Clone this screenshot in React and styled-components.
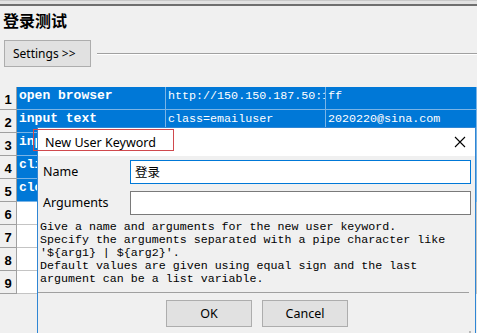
import React from "react";
import styled, { createGlobalStyle } from "styled-components";

const Global = createGlobalStyle`
  html, body { margin: 0; padding: 0; }
  body {
    background: #f0f0f0;
    width: 477px;
    height: 333px;
    overflow: hidden;
    font-family: "Noto Sans", "Liberation Sans", sans-serif;
  }
`;

const Page = styled.div`
  position: relative;
  width: 477px;
  height: 333px;
  display: flex;
  flex-direction: column;
  background: #f0f0f0;
`;

const TopStrip = styled.div`
  height: 6px;
  background: linear-gradient(
    to bottom,
    #c9c9c9 0px, #c9c9c9 1px,
    #e2e2e2 1px, #e2e2e2 4px,
    #6f6f6f 4px, #6f6f6f 6px
  );
`;

const Title = styled.h1`
  margin: 3px 0 0 3px;
  height: 22px;
  font-family: "Noto Sans CJK SC", sans-serif;
  font-size: 16px;
  font-weight: 700;
  line-height: 22px;
  color: #000;
`;

const SettingsRow = styled.div`
  margin-top: 9px;
  display: flex;
  align-items: center;
  gap: 6px;
  padding-left: 4px;
`;

const SettingsButton = styled.button`
  width: 87px;
  height: 27px;
  padding: 0 0 0 8px;
  text-align: left;
  background: #e1e1e1;
  border: 1px solid #adadad;
  font-family: "Noto Sans", sans-serif;
  font-size: 12px;
  color: #000;
`;

const Rule = styled.div`
  flex: 1;
  height: 1px;
  background: #a0a0a0;
  box-shadow: 0 1px 0 #ffffff;
`;

const Grid = styled.div`
  margin-top: 20px;
  display: grid;
  grid-template-columns: 17px 149px 160px 1fr;
  grid-auto-rows: 23px;
`;

const RowLabel = styled.div`
  background: #f0f0f0;
  border-right: 1px solid #a0a0a0;
  border-bottom: 1px solid #a0a0a0;
  display: flex;
  align-items: center;
  justify-content: center;
  font-family: "Liberation Sans", sans-serif;
  font-weight: 700;
  font-size: 13px;
  color: #000;
  padding-top: 2px;
  box-sizing: border-box;
`;

const Cell = styled.div`
  background: ${(p) => (p.$selected ? "#0078d7" : "#ffffff")};
  border-right: 1px solid ${(p) => (p.$selected ? "#7ab4e6" : "#c4c4c4")};
  border-bottom: 1px solid ${(p) => (p.$selected ? "#7ab4e6" : "#c4c4c4")};
  color: #fff;
  font-family: "Liberation Mono", monospace;
  font-size: ${(p) => (p.$keyword ? "13px" : "11.7px")};
  font-weight: ${(p) => (p.$keyword ? 700 : 400)};
  line-height: 18px;
  padding: 0 0 0 2px;
  white-space: nowrap;
  overflow: hidden;
  box-sizing: border-box;
`;

const rows = [
  ["open browser", "http://150.150.187.50:1", "ff"],
  ["input text", "class=emailuser", "2020220@sina.com"],
  ["input text", "", ""],
  ["click element", "", ""],
  ["close browser", "", ""],
  ["", "", ""],
  ["", "", ""],
  ["", "", ""],
  ["", "", ""],
];

const Dialog = styled.div`
  position: absolute;
  left: 37px;
  top: 127px;
  width: 439px;
  height: 215px;
  box-sizing: border-box;
  border: 1px solid #2f86d4;
  background: #f0f0f0;
  display: flex;
  flex-direction: column;
`;

const TitleBar = styled.div`
  height: 28px;
  flex: none;
  background: #ffffff;
  display: flex;
  align-items: center;
  justify-content: space-between;
  padding: 0 9px 0 7px;
`;

const DialogTitle = styled.span`
  font-family: "Noto Sans", sans-serif;
  font-size: 12.5px;
  color: #000;
`;

const CloseIcon = () => (
  <svg width="12" height="12" viewBox="0 0 12 12">
    <path d="M1 1 L11 11 M11 1 L1 11" stroke="#000" strokeWidth="1.1" fill="none" />
  </svg>
);

const Annotation = styled.div`
  position: absolute;
  left: 33px;
  top: 129px;
  width: 141px;
  height: 22px;
  border: 1px solid #d0494d;
  box-sizing: border-box;
  pointer-events: none;
`;

const Body = styled.div`
  flex: 1;
  display: flex;
  flex-direction: column;
  padding: 4px 4px 0 1px;
`;

const FieldRow = styled.div`
  display: flex;
  align-items: center;
  height: 24px;
  margin-bottom: 7px;
`;

const Label = styled.label`
  width: 87px;
  flex: none;
  padding-left: 4px;
  font-family: "Noto Sans", sans-serif;
  font-size: 12.5px;
  line-height: 16px;
  color: #000;
`;

const Input = styled.div`
  width: 341px;
  height: 24px;
  box-sizing: border-box;
  background: #fff;
  border: 1px solid ${(p) => (p.$focused ? "#0078d7" : "#7a7a7a")};
  font-family: "Noto Sans CJK SC", sans-serif;
  font-size: 12.5px;
  line-height: 22px;
  padding-left: 4px;
  color: #000;
`;

const Help = styled.pre`
  margin: -1px 0 0 1px;
  font-family: "Liberation Mono", monospace;
  font-size: 11.65px;
  line-height: 12.9px;
  color: #000;
  height: 71px;
`;

const Separator = styled.div`
  height: 1px;
  margin-right: 2px;
  margin-left: -1px;
  background: #a0a0a0;
`;

const Buttons = styled.div`
  display: flex;
  gap: 10px;
  padding-left: 127px;
  margin-top: 7px;
`;

const DialogButton = styled.button`
  width: 86px;
  height: 27px;
  background: #e1e1e1;
  border: 1px solid #adadad;
  font-family: "Noto Sans", sans-serif;
  font-size: 12.5px;
  color: #000;
  padding: 0;
`;

const Grip = styled.svg`
  position: absolute;
  right: 3px;
  bottom: 1px;
`;

export default function App() {
  return (
    <Page>
      <Global />
      <TopStrip />
      <Title>登录测试</Title>
      <SettingsRow>
        <SettingsButton>Settings &gt;&gt;</SettingsButton>
        <Rule />
      </SettingsRow>
      <Grid>
        {rows.map((r, i) => (
          <React.Fragment key={i}>
            <RowLabel>{i + 1}</RowLabel>
            <Cell $keyword $selected={i < 5}>{r[0]}</Cell>
            <Cell $selected={i < 5}>{r[1]}</Cell>
            <Cell $selected={i < 5}>{r[2]}</Cell>
          </React.Fragment>
        ))}
      </Grid>
      <Dialog>
        <TitleBar>
          <DialogTitle>New User Keyword</DialogTitle>
          <CloseIcon />
        </TitleBar>
        <Body>
          <FieldRow>
            <Label>Name</Label>
            <Input $focused>登录</Input>
          </FieldRow>
          <FieldRow>
            <Label>Arguments</Label>
            <Input />
          </FieldRow>
          <Help>{`Give a name and arguments for the new user keyword.
Specify the arguments separated with a pipe character like
'\${arg1} | \${arg2}'.
Default values are given using equal sign and the last
argument can be a list variable.`}</Help>
          <Separator />
          <Buttons>
            <DialogButton>OK</DialogButton>
            <DialogButton>Cancel</DialogButton>
          </Buttons>
        </Body>
        <Grip width="9" height="9" viewBox="0 0 9 9">
          <rect x="6" y="0" width="2" height="2" fill="#b8b8b8" />
          <rect x="3" y="3" width="2" height="2" fill="#b8b8b8" />
          <rect x="6" y="3" width="2" height="2" fill="#b8b8b8" />
          <rect x="0" y="6" width="2" height="2" fill="#b8b8b8" />
          <rect x="3" y="6" width="2" height="2" fill="#b8b8b8" />
          <rect x="6" y="6" width="2" height="2" fill="#b8b8b8" />
        </Grip>
      </Dialog>
      <Annotation />
    </Page>
  );
}
